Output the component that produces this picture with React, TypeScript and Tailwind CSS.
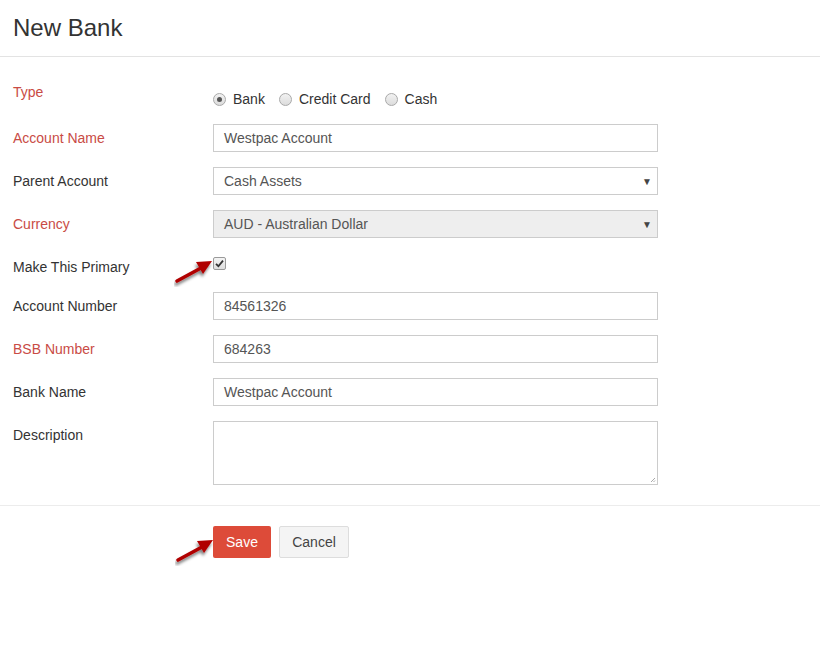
import type { ReactNode } from "react";

const font = { fontFamily: '"Liberation Sans", Arial, sans-serif' };

function Arrow({ className }: { className: string }) {
  return (
    <svg className={className} width="46" height="32" viewBox="0 0 46 32" aria-hidden>
      <defs>
        <filter id="arrowShadow" x="-30%" y="-30%" width="160%" height="170%">
          <feDropShadow dx="-1" dy="3" stdDeviation="1.8" floodColor="#000" floodOpacity="0.5" />
        </filter>
      </defs>
      <g filter="url(#arrowShadow)">
        <line x1="3" y1="26" x2="27" y2="13" stroke="#b00000" strokeWidth="3.6" strokeLinecap="round" />
        <polygon points="38,6 22,7 29,19" fill="#b00000" />
      </g>
    </svg>
  );
}

function Row({
  label,
  required,
  children,
  className = "items-center",
  labelClass = "",
}: {
  label: string;
  required?: boolean;
  children: ReactNode;
  className?: string;
  labelClass?: string;
}) {
  return (
    <div className={`flex ${className}`}>
      <label
        className={`w-[200px] shrink-0 text-[14px] leading-5 ${labelClass} ${
          required ? "text-[#c94b45]" : "text-[#333]"
        }`}
      >
        {label}
      </label>
      <div className="w-[445px]">{children}</div>
    </div>
  );
}

function TextInput({ value }: { value: string }) {
  return (
    <div className="flex h-[28px] items-center border border-[#ccc] bg-white px-[10px] text-[14px] text-[#555]">
      {value}
    </div>
  );
}

function SelectBox({ value, disabled }: { value: string; disabled?: boolean }) {
  return (
    <div
      className={`flex h-[28px] items-center justify-between border border-[#ccc] pl-[10px] pr-[5px] text-[14px] text-[#555] ${
        disabled ? "bg-[#eee]" : "bg-white"
      }`}
    >
      <span>{value}</span>
      <span className="text-[10px] text-[#444]">▼</span>
    </div>
  );
}

function Radio({ label, checked }: { label: string; checked?: boolean }) {
  return (
    <span className="flex items-center">
      <span className="flex h-[13px] w-[13px] items-center justify-center rounded-full border border-[#a9a9a9] bg-gradient-to-b from-[#f2f2f2] to-[#dcdcdc]">
        {checked && <span className="h-[5px] w-[5px] rounded-full bg-[#555]" />}
      </span>
      <span className="ml-[7px] text-[14px] text-[#333]">{label}</span>
    </span>
  );
}

export default function App() {
  return (
    <div className="relative h-[648px] w-[820px] overflow-hidden bg-white" style={font}>
      <header className="flex h-[57px] items-center border-b border-[#e3e3e3] px-[13px]">
        <h1 className="text-[24px] text-[#333]">New Bank</h1>
      </header>

      <div className="border-b border-[#ececec] px-[13px] pb-[20px] pt-[24px]">
        <div className="flex flex-col gap-[15px]">
          <Row label="Type" required className="h-[28px] items-start" labelClass="pt-[1px]">
            <div className="mt-[8px] flex items-center gap-[14px]">
              <Radio label="Bank" checked />
              <Radio label="Credit Card" />
              <Radio label="Cash" />
            </div>
          </Row>
          <Row label="Account Name" required>
            <TextInput value="Westpac Account" />
          </Row>
          <Row label="Parent Account">
            <SelectBox value="Cash Assets" />
          </Row>
          <Row label="Currency" required>
            <SelectBox value="AUD - Australian Dollar" disabled />
          </Row>
          <Row label="Make This Primary" className="h-[24px] items-start" labelClass="pt-[4px]">
            <span className="mt-[4px] flex h-[13px] w-[13px] items-center justify-center rounded-[2px] border border-[#9a9a9a] bg-gradient-to-b from-[#f4f4f4] to-[#dedede]">
              <svg width="9" height="9" viewBox="0 0 9 9" aria-hidden>
                <path d="M1 4.8 L3.4 7.2 L8 1.6" fill="none" stroke="#333" strokeWidth="1.8" />
              </svg>
            </span>
          </Row>
          <Row label="Account Number">
            <TextInput value="84561326" />
          </Row>
          <Row label="BSB Number" required>
            <TextInput value="684263" />
          </Row>
          <Row label="Bank Name">
            <TextInput value="Westpac Account" />
          </Row>
          <Row label="Description" className="items-start" labelClass="pt-[4px]">
            <div className="relative h-[64px] border border-[#ccc] bg-white">
              <svg className="absolute bottom-[1px] right-[1px]" width="6" height="6" viewBox="0 0 6 6" aria-hidden>
                <path d="M5 1 L1 5 M5 3.5 L3.5 5" stroke="#aaa" strokeWidth="1" />
              </svg>
            </div>
          </Row>
        </div>
      </div>

      <div className="flex gap-[8px] pl-[213px] pt-[20px]">
        <button
          type="button"
          className="h-[32px] w-[58px] rounded-[2px] bg-[#dd4b39] text-[14px] text-white"
        >
          Save
        </button>
        <button
          type="button"
          className="h-[32px] w-[70px] rounded-[2px] border border-[#ddd] bg-[#f4f4f4] text-[14px] text-[#444]"
        >
          Cancel
        </button>
      </div>

      <Arrow className="absolute left-[174px] top-[255px]" />
      <Arrow className="absolute left-[175px] top-[534px]" />
    </div>
  );
}
